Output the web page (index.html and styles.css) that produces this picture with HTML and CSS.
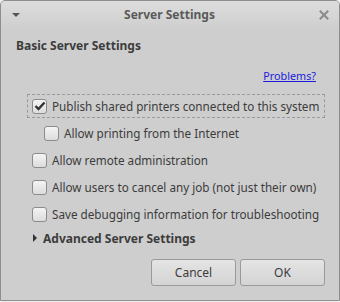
FILE: index.html
```html
<!DOCTYPE html>
<html lang="en">
<head>
    <meta charset="UTF-8">
    <title>Server Settings</title>
    <link rel="stylesheet" href="styles.css">
</head>
<body>
    <div class="window">
        <div class="titlebar">
            <span class="menu-arrow"></span>
            <span class="title">Server Settings</span>
            <svg class="close" width="10" height="10" viewBox="0 0 10 10">
                <path d="M1.5 1.5 L8.5 8.5 M8.5 1.5 L1.5 8.5" stroke="#8a8a8a" stroke-width="2" stroke-linecap="square"/>
            </svg>
        </div>

        <div class="content">
            <h2 class="section">Basic Server Settings</h2>
            <div class="link-row"><a href="#">Problems?</a></div>

            <div class="options">
                <label class="option focused">
                    <span class="box checked">
                        <svg width="12" height="10" viewBox="0 0 12 10">
                            <path d="M1.5 5 L4.5 8 L10.5 1.5" fill="none" stroke="#333" stroke-width="2.4"/>
                        </svg>
                    </span>
                    Publish shared printers connected to this system
                </label>
                <label class="option sub">
                    <span class="box"></span>
                    Allow printing from the Internet
                </label>
                <label class="option">
                    <span class="box"></span>
                    Allow remote administration
                </label>
                <label class="option">
                    <span class="box"></span>
                    Allow users to cancel any job (not just their own)
                </label>
                <label class="option">
                    <span class="box"></span>
                    Save debugging information for troubleshooting
                </label>
            </div>

            <div class="expander">
                <span class="arrow"></span>
                Advanced Server Settings
            </div>

            <div class="buttons">
                <button class="btn">Cancel</button>
                <button class="btn">OK</button>
            </div>
        </div>
    </div>
</body>
</html>
```

FILE: styles.css
```css
body {
    margin: 0;
    padding: 0;
    background: #f0f0f0;
    font-family: 'Noto Sans', sans-serif;
    font-size: 12px;
    color: #3c3c3c;
}

.window {
    width: 338px;
    height: 299px;
    border: 1px solid #8e8e8e;
    border-radius: 5px 5px 0 0;
    background: #cecece;
    overflow: hidden;
}

.titlebar {
    height: 27px;
    display: flex;
    align-items: center;
    justify-content: space-between;
    padding: 0 10px 0 11px;
    background: linear-gradient(#dddddd, #cfcfcf);
}

.menu-arrow {
    width: 0;
    height: 0;
    border-left: 4px solid transparent;
    border-right: 4px solid transparent;
    border-top: 4px solid #555;
    margin-top: 1px;
}

.title {
    font-weight: bold;
    color: #5a5a5a;
    font-size: 12px;
}

.content {
    padding: 0 15px 0 15px;
}

.section {
    margin: 9px 0 0 0;
    font-size: 12px;
    font-weight: bold;
    line-height: 18px;
}

.link-row {
    text-align: right;
    margin-top: 14px;
    padding-right: 8px;
    line-height: 14px;
}

.link-row a {
    color: #1a1adc;
    font-size: 10.8px;
}

.options {
    margin-top: 12px;
    padding-left: 12px;
    font-size: 11.7px;
    white-space: nowrap;
}

.option {
    display: flex;
    align-items: center;
    gap: 5px;
    height: 22px;
    margin-bottom: 5px;
    padding-left: 4px;
}

.option.focused {
    width: 292px;
    outline: 1px dashed #9a9a9a;
}

.option.sub {
    padding-left: 16px;
}

.box {
    width: 13px;
    height: 13px;
    border: 1px solid #8c8c8c;
    border-radius: 3px;
    background: linear-gradient(#f4f4f4, #dcdcdc);
    display: flex;
    align-items: center;
    justify-content: center;
}

.expander {
    display: flex;
    align-items: center;
    gap: 6px;
    font-weight: bold;
    padding-left: 17px;
    height: 18px;
    margin-top: -1px;
}

.arrow {
    width: 0;
    height: 0;
    border-top: 4px solid transparent;
    border-bottom: 4px solid transparent;
    border-left: 4px solid #333;
}

.buttons {
    display: flex;
    justify-content: flex-end;
    gap: 4px;
    margin-top: 12px;
    margin-right: -1px;
}

.btn {
    width: 85px;
    height: 27px;
    border: 1px solid #9a9a9a;
    border-radius: 3px;
    background: linear-gradient(#e4e4e4, #d4d4d4);
    font-family: 'Noto Sans', sans-serif;
    font-size: 12px;
    color: #3c3c3c;
}
```
